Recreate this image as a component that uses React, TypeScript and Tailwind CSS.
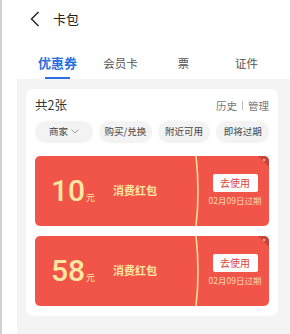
import React from 'react';

const font = { fontFamily: '"Noto Sans CJK SC", "Noto Sans", sans-serif' };

const tabs = ['优惠券', '会员卡', '票', '证件'];
const chips = ['购买/兑换', '附近可用', '即将过期'];

const Coupon = ({ amount }: { amount: string }) => {
  return (
    <div className="relative flex h-[70px] overflow-hidden rounded-[5px] bg-[#f1554a]">
      <div className="flex flex-1 items-center pl-[16px]">
        <div className="flex w-[62px] items-baseline">
          <span className="font-['Roboto'] text-[30px] font-medium leading-none text-[#fde8a1]">{amount}</span>
          <span className="ml-[1px] text-[9px] text-[#fde8a1]">元</span>
        </div>
        <span className="text-[11px] font-bold text-[#fde8a1]">消费红包</span>
      </div>
      <svg width="6" height="70" viewBox="0 0 6 70" className="shrink-0">
        <path d="M1 0 Q5 35 1 70" stroke="#fbdc93" strokeWidth="1.6" fill="none" />
      </svg>
      <div className="flex w-[68px] flex-col items-center justify-center pb-[1px]">
        <div className="flex h-[18px] w-[45px] items-center justify-center rounded-[2px] bg-white text-[10px] text-[#d8453a]">
          去使用
        </div>
        <span className="mt-[2px] text-[8.5px] text-[#fcd9b0]">02月09日过期</span>
      </div>
      <svg width="11" height="11" viewBox="0 0 11 11" className="absolute right-0 top-0">
        <path d="M0 0 H11 V11 Z" fill="#c8443a" />
        <path d="M6 2.5 L7.5 4 L6 5.5 L4.5 4 Z" fill="#f3b0a6" />
      </svg>
    </div>
  );
};

export default function App() {
  return (
    <div className="flex h-[334px] w-[290px] flex-col overflow-hidden border-l-2 border-[#d2d2d2] bg-white" style={font}>
      <div className="flex items-center pl-[28px] pt-[9px]">
        <svg width="10" height="16" viewBox="0 0 10 16">
          <path d="M8.5 1 L1.5 8 L8.5 15" stroke="#222" strokeWidth="1.4" fill="none" />
        </svg>
        <span className="ml-[13px] text-[13px] text-[#222]">卡包</span>
      </div>
      <div className="mt-[25px] grid grid-cols-4 pl-[24px] pr-[12px]">
        {tabs.map((t, i) => (
          <div key={t} className="flex flex-col items-center">
            <span className={i === 0 ? 'text-[13px] font-bold leading-[18px] text-[#2b6fe2]' : 'text-[11.5px] leading-[18px] text-[#555]'}>
              {t}
            </span>
            <div className={i === 0 ? 'mt-[5px] h-[2px] w-[25px] bg-[#2b6fe2]' : 'mt-[5px] h-[2px] w-[25px]'} />
          </div>
        ))}
      </div>
      <div className="flex flex-1">
        <div className="w-[15px] shrink-0 bg-white" />
        <div className="flex-1 bg-[#f4f4f4] pl-[9px] pr-[12px] pt-[10px]">
          <div className="rounded-[7px] bg-white px-[9px] pb-[10px] pt-[8px]">
            <div className="flex h-[18px] items-center justify-between">
              <span className="text-[12.5px] text-[#333]">共2张</span>
              <div className="flex items-center text-[10.5px] text-[#777]">
                <span>历史</span>
                <span className="mx-[5px] h-[9px] w-px bg-[#bbb]" />
                <span>管理</span>
              </div>
            </div>
            <div className="mt-[6px] flex gap-[6px]">
              <div className="flex h-[22px] w-[58px] items-center justify-center gap-[3px] rounded-full bg-[#f3f3f3] text-[9.5px] text-[#444]">
                <span>商家</span>
                <svg width="8" height="5" viewBox="0 0 8 5">
                  <path d="M0.5 0.5 L4 4 L7.5 0.5" stroke="#888" strokeWidth="0.8" fill="none" />
                </svg>
              </div>
              {chips.map((c) => (
                <div key={c} className="flex h-[22px] flex-1 items-center justify-center rounded-full bg-[#f3f3f3] text-[9.5px] text-[#444]">
                  {c}
                </div>
              ))}
            </div>
            <div className="mt-[13px] flex flex-col gap-[10px]">
              <Coupon amount="10" />
              <Coupon amount="58" />
            </div>
          </div>
        </div>
      </div>
    </div>
  );
}
